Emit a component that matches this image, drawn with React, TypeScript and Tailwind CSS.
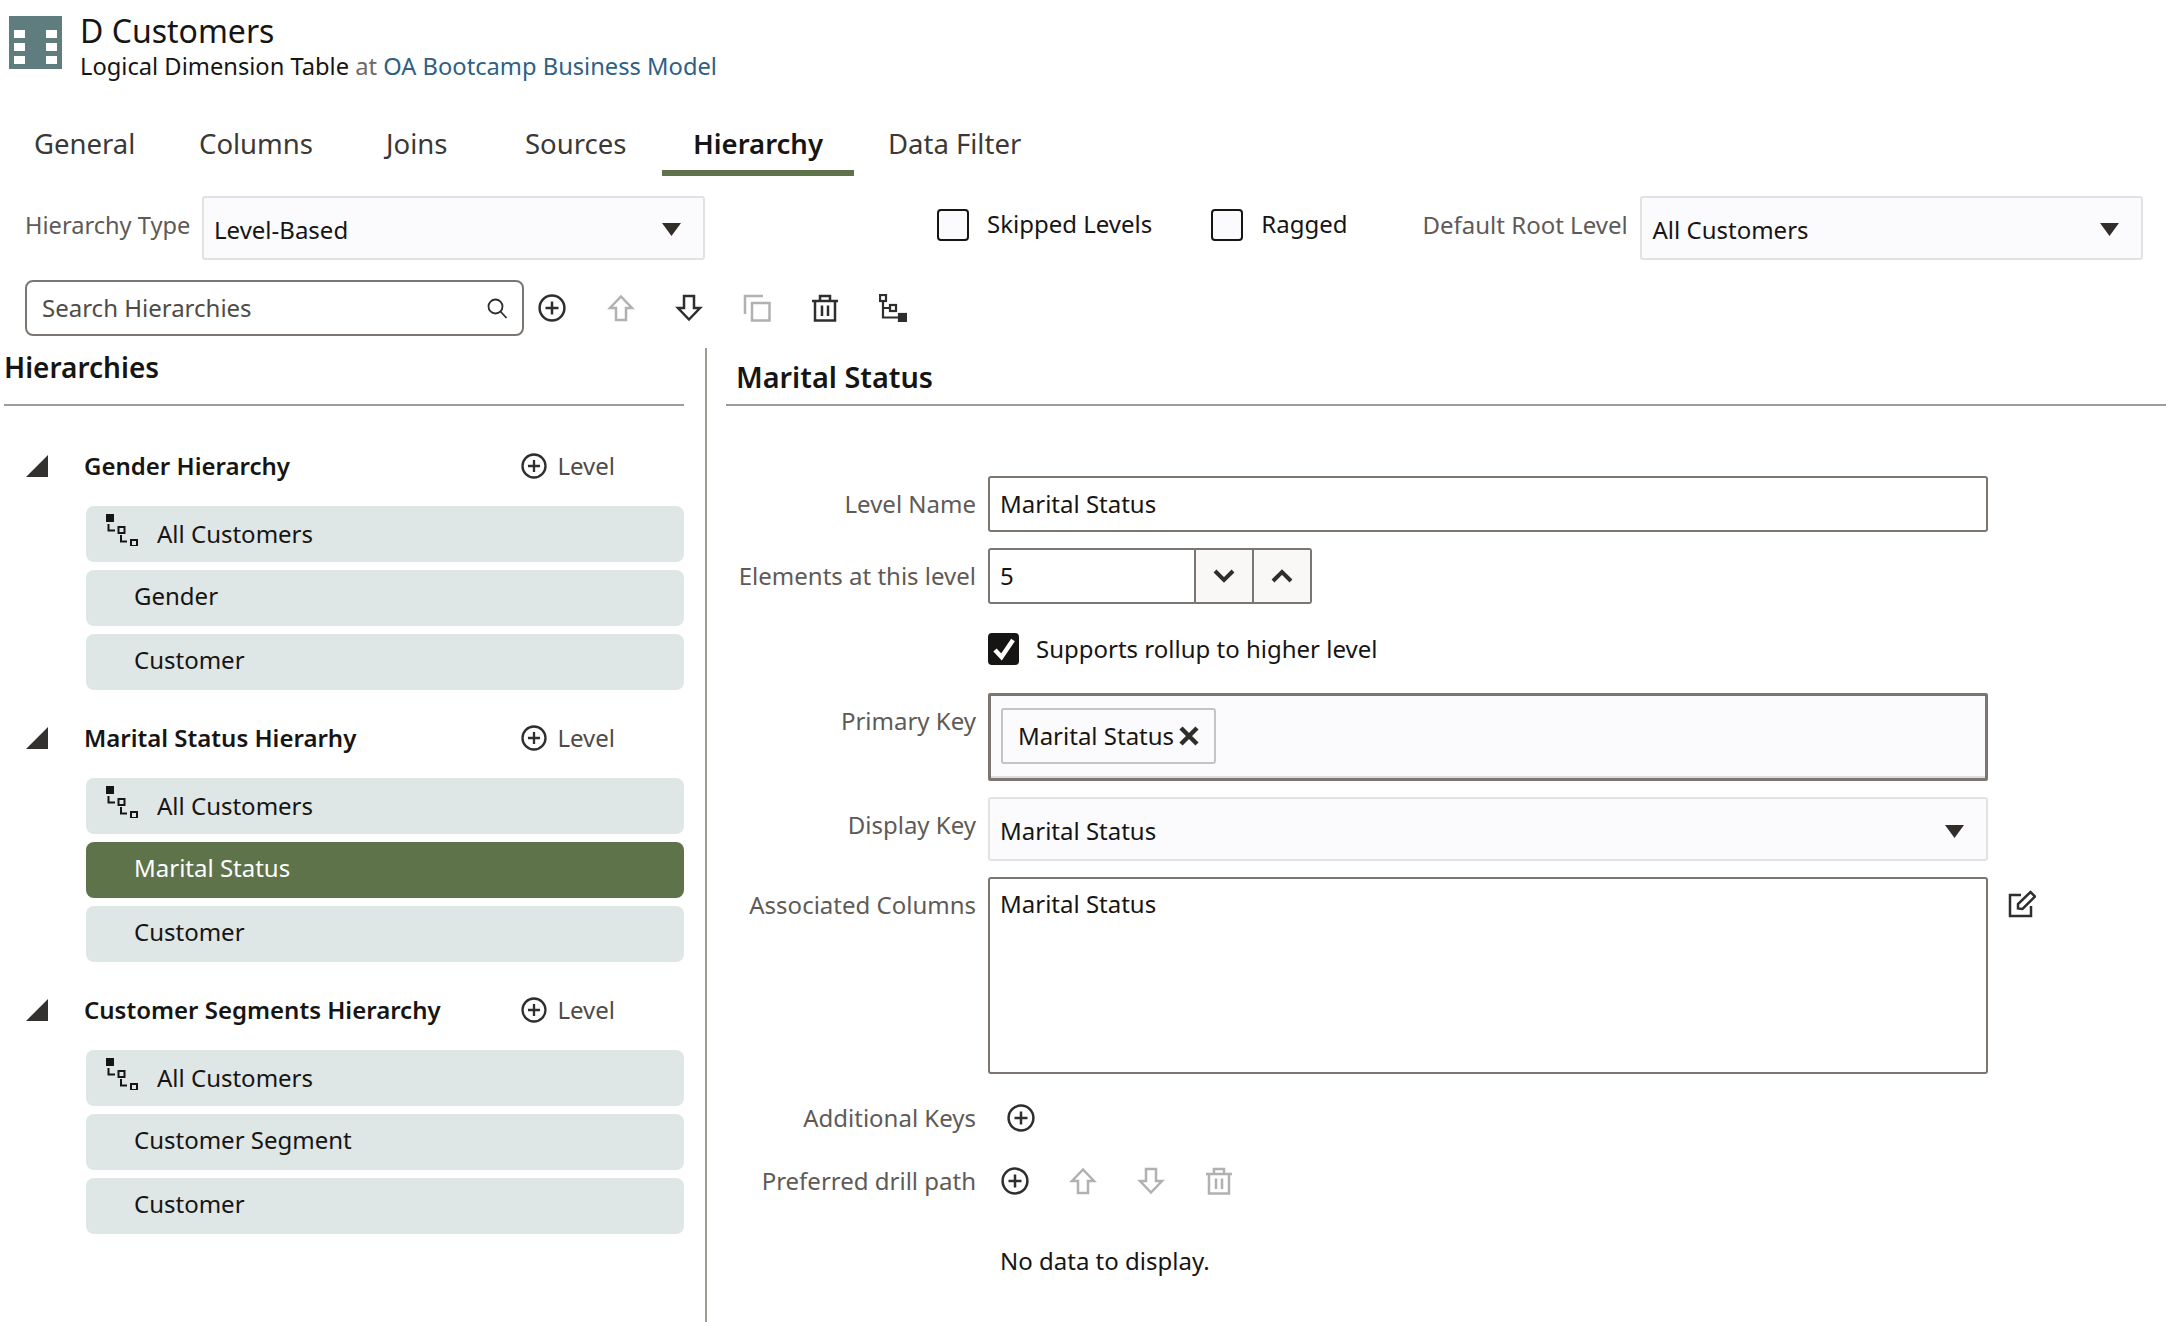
const dark = "#2f2e2c";
const muted = "#b3b1af";

const PlusCircle = ({ size = 28, color = dark }: { size?: number; color?: string }) => (
  <svg width={size} height={size} viewBox="0 0 28 28" fill="none" stroke={color} strokeWidth="2.5" className="shrink-0">
    <circle cx="14" cy="14" r="12.4" />
    <path d="M14 7.5v13M7.5 14h13" />
  </svg>
);

const ArrowUp = ({ color = muted }: { color?: string }) => (
  <svg width="28" height="28" viewBox="0 0 28 28" fill="none" stroke={color} strokeWidth="2.5" className="shrink-0">
    <path d="M14 2.5 25 14h-6v12H9V14H3z" />
  </svg>
);

const ArrowDown = ({ color = dark }: { color?: string }) => (
  <svg width="28" height="28" viewBox="0 0 28 28" fill="none" stroke={color} strokeWidth="2.5" className="shrink-0">
    <path d="M14 25.5 25 14h-6V2H9v12H3z" />
  </svg>
);

const Trash = ({ color = dark }: { color?: string }) => (
  <svg width="28" height="28" viewBox="0 0 28 28" fill="none" stroke={color} strokeWidth="2.5" className="shrink-0">
    <path d="M1 7h26M9 7V2h10v5M4 7v19.5h20V7M11 11.5v10.5M17 11.5v10.5" />
  </svg>
);

const Copy = () => (
  <svg width="28" height="28" viewBox="0 0 28 28" fill="none" stroke={muted} strokeWidth="2.5" className="shrink-0">
    <path d="M20 2H2v18" />
    <rect x="9" y="9" width="17.5" height="17.5" />
  </svg>
);

const TreeTool = () => (
  <svg width="28" height="28" viewBox="0 0 28 28" fill="none" stroke={dark} strokeWidth="2.2" className="shrink-0">
    <rect x="1" y="1" width="6" height="6" />
    <path d="M4 7v16.5h16M4 14h6" />
    <rect x="11" y="11" width="6" height="6" />
    <rect x="20" y="20" width="8" height="7" fill={dark} />
  </svg>
);

const TreeRow = () => (
  <svg width="32" height="32" viewBox="0 0 32 32" fill="none" stroke="#161513" strokeWidth="2" className="shrink-0">
    <rect x="0" y="0" width="8" height="8" fill="#161513" stroke="none" />
    <path d="M2.5 10v6.5H9M15 21v6.5h6" />
    <rect x="12.5" y="13" width="6" height="6" />
    <rect x="25" y="26" width="6" height="6" />
  </svg>
);

const Caret = () => (
  <svg width="19" height="13" viewBox="0 0 19 13" className="shrink-0">
    <path d="M0 0h19L9.5 13z" fill="#312d2a" />
  </svg>
);

const Select = ({ value, className }: { value: string; className: string }) => (
  <div className={`flex h-[64px] items-center justify-between rounded-[3px] border-2 border-[#e2e2e2] bg-[#fbfbfd] pt-[3px] pr-[22px] ${className}`}>
    <span>{value}</span>
    <Caret />
  </div>
);

const Check = ({ label }: { label: string }) => (
  <div className="flex items-center gap-[18px]">
    <div className="h-[32px] w-[32px] rounded-[4px] border-2 border-[#161513] bg-[#fbfbfd]" />
    <span className="-mt-[1px] text-[#161513]">{label}</span>
  </div>
);

const hierarchies = [
  { name: "Gender Hierarchy", levels: ["Gender", "Customer"], selected: "" },
  { name: "Marital Status Hierarhy", levels: ["Marital Status", "Customer"], selected: "Marital Status" },
  { name: "Customer Segments Hierarchy", levels: ["Customer Segment", "Customer"], selected: "" },
];

const tabs = [
  { label: "General", cls: "ml-[3px] w-[165px]" },
  { label: "Columns", cls: "w-[187px]" },
  { label: "Joins", cls: "w-[139px]" },
  { label: "Sources", cls: "w-[168px]" },
];

const FormRow = ({ label, className, alignTop, children }: { label: string; className?: string; alignTop?: boolean; children: React.ReactNode }) => (
  <div className={`flex gap-[12px] ${alignTop ? "items-start" : "items-center"} ${className ?? ""}`}>
    <div className={`w-[250px] shrink-0 text-right text-[#5f5a56] whitespace-nowrap ${alignTop ? "mt-[12px]" : ""}`}>{label}</div>
    {children}
  </div>
);

export default function App() {
  return (
    <div className="h-[1322px] w-[2166px] overflow-hidden bg-white text-[24px] leading-[32px] text-[#161513] [font-family:'Noto_Sans',sans-serif]">
      <header className="flex pl-[9px] pt-[16px]">
        <svg width="53" height="53" viewBox="0 0 53 53" className="shrink-0">
          <rect width="53" height="53" fill="#5f7d7e" />
          <g fill="#fff">
            <rect x="5" y="14" width="11" height="8" />
            <rect x="37" y="14" width="11" height="8" />
            <rect x="5" y="27" width="11" height="8" />
            <rect x="37" y="27" width="11" height="8" />
            <rect x="5" y="40" width="11" height="8" />
            <rect x="37" y="40" width="11" height="8" />
          </g>
        </svg>
        <div className="-mt-[4px] ml-[18px]">
          <div className="text-[32px] leading-[38px]">D Customers</div>
          <div className="text-[23.7px]">
            Logical Dimension Table <span className="text-[#6f6a66]">at</span>{" "}
            <span className="text-[#2f5f85]">OA Bootcamp Business Model</span>
          </div>
        </div>
      </header>

      <nav className="mt-[37px] flex h-[57px] pl-[31px] text-[#3b3835] text-[27.5px]">
        {tabs.map((t) => (
          <div key={t.label} className={`${t.cls} pt-[9px]`}>{t.label}</div>
        ))}
        <div className="-ml-[31px] flex h-[57px] w-[192px] justify-center border-b-[6px] border-[#5e7349] pt-[9px] font-semibold text-[#161513]">
          Hierarchy
        </div>
        <div className="ml-[34px] pt-[9px]">Data Filter</div>
      </nav>

      <div className="mt-[20px] flex items-center pl-[25px]">
        <div className="w-[177px] -mt-[6px] text-[#5f5a56] text-[23.6px]">Hierarchy Type</div>
        <Select value="Level-Based" className="w-[503px] pl-[10px]" />
        <div className="ml-[232px] -mt-[7px]"><Check label="Skipped Levels" /></div>
        <div className="ml-[59px] -mt-[7px]"><Check label="Ragged" /></div>
        <div className="ml-[75px] w-[217px] -mt-[6px] text-[#5f5a56] whitespace-nowrap">Default Root Level</div>
        <Select value="All Customers" className="w-[503px] pl-[11px]" />
      </div>

      <div className="mt-[20px] flex h-[56px] items-center pl-[25px]">
        <div className="flex h-[56px] w-[499px] items-center justify-between rounded-[8px] border-2 border-[#7b7671] pl-[15px] pr-[14px]">
          <span className="text-[#4f4b47]">Search Hierarchies</span>
          <svg width="21" height="21" viewBox="0 0 21 21" fill="none" stroke={dark} strokeWidth="1.8">
            <circle cx="8.5" cy="8.5" r="7" />
            <path d="m13.5 13.5 6 6.5" />
          </svg>
        </div>
        <div className="ml-[14px] flex gap-[40px]">
          <PlusCircle />
          <div className="ml-[1px]"><ArrowUp /></div>
          <ArrowDown />
          <Copy />
          <Trash />
          <TreeTool />
        </div>
      </div>

      <div className="mt-[12px] flex">
        <aside className="h-[974px] w-[707px] shrink-0 border-r-2 border-[#9e9c97] pl-[4px] pr-[21px]">
          <h2 className="h-[58px] border-b-2 border-[#9e9c97] pt-[3px] text-[28px] font-semibold">Hierarchies</h2>
          <div className="mt-[41px] flex flex-col gap-[29px]">
            {hierarchies.map((h) => (
              <section key={h.name}>
                <div className="flex h-[38px] items-center pl-[22px]">
                  <svg width="22" height="22" viewBox="0 0 22 22" className="shrink-0">
                    <path d="M0 22 22 0v22z" fill="#33312f" />
                  </svg>
                  <span className="ml-[36px] font-semibold">{h.name}</span>
                  <div className="ml-auto mr-[69px] flex items-center gap-[10px] text-[#4f4b47]">
                    <PlusCircle size={26} />
                    Level
                  </div>
                </div>
                <div className="mt-[21px] ml-[82px] flex flex-col gap-[8px]">
                  <div className="flex h-[56px] items-center rounded-[8px] bg-[#dfe6e6] pl-[20px]">
                    <div className="-mt-[8px]"><TreeRow /></div>
                    <span className="ml-[19px]">All Customers</span>
                  </div>
                  {h.levels.map((l) => (
                    <div key={l} className={`flex h-[56px] items-center rounded-[8px] pb-[4px] pl-[48px] ${h.selected === l ? "bg-[#5e7349] text-white" : "bg-[#dfe6e6]"}`}>
                      {l}
                    </div>
                  ))}
                </div>
              </section>
            ))}
          </div>
        </aside>

        <main className="flex-1 pl-[19px]">
          <h2 className="h-[58px] border-b-2 border-[#9e9c97] pl-[10px] pt-[13px] text-[28.8px] font-semibold">Marital Status</h2>

          <FormRow label="Level Name" className="mt-[70px]">
            <div className="flex h-[56px] w-[1000px] items-center rounded-[3px] border-2 border-[#7b7671] pl-[10px]">Marital Status</div>
          </FormRow>

          <FormRow label="Elements at this level" className="mt-[16px]">
            <div className="flex h-[56px] w-[324px] rounded-[3px] border-2 border-[#7b7671]">
              <div className="flex flex-1 items-center pl-[10px]">5</div>
              <div className="flex w-[58px] items-center justify-center border-l-2 border-[#7b7671] bg-[#f9f8f7]">
                <svg width="22" height="14" viewBox="0 0 22 14" fill="none" stroke={dark} strokeWidth="4"><path d="m2 2 9 9 9-9" /></svg>
              </div>
              <div className="flex w-[58px] items-center justify-center border-l-2 border-[#7b7671] bg-[#f9f8f7]">
                <svg width="22" height="14" viewBox="0 0 22 14" fill="none" stroke={dark} strokeWidth="4"><path d="m2 12 9-9 9 9" /></svg>
              </div>
            </div>
          </FormRow>

          <div className="ml-[262px] mt-[29px] flex h-[32px] items-center gap-[17px]">
            <div className="flex h-[32px] w-[31px] items-center justify-center rounded-[4px] bg-[#161513]">
              <svg width="24" height="24" viewBox="0 0 24 24" fill="none" stroke="#fff" strokeWidth="4.5"><path d="m3 13 6.5 7L21 3" /></svg>
            </div>
            Supports rollup to higher level
          </div>

          <FormRow label="Primary Key" alignTop className="mt-[28px]">
            <div className="flex h-[88px] w-[1000px] items-start rounded-[2px] border-[3px] border-[#7b7671] bg-[#fbfbfd] pl-[10px] pt-[12px] shadow-[inset_0_-2px_0_#dcdcdc]">
              <div className="flex h-[56px] w-[215px] items-center justify-center gap-[5px] rounded-[3px] border-2 border-[#c4c4c4]">
                Marital Status
                <svg width="20" height="20" viewBox="0 0 20 20" fill="none" stroke="#2f2e2c" strokeWidth="4.5"><path d="m2 2 16 16M18 2 2 18" /></svg>
              </div>
            </div>
          </FormRow>

          <FormRow label="Display Key" alignTop className="mt-[16px]">
            <div className="flex h-[64px] w-[1000px] items-center justify-between rounded-[3px] border-2 border-[#e2e2e2] bg-[#fbfbfd] pl-[10px] pr-[22px] pt-[4px]">
              Marital Status
              <Caret />
            </div>
          </FormRow>

          <div className="mt-[16px] flex items-start">
            <FormRow label="Associated Columns" alignTop>
              <div className="h-[197px] w-[1000px] rounded-[3px] border-2 border-[#7b7671] pl-[10px] pt-[9px]">Marital Status</div>
            </FormRow>
            <svg width="28" height="28" viewBox="0 0 28 28" fill="none" stroke={dark} strokeWidth="2.5" className="ml-[20px] mt-[13px]">
              <path d="M23 16v10H2V5h11" />
              <path d="M10 18.5V14L22.5 2 27 6.5 14.5 19z" />
            </svg>
          </div>

          <FormRow label="Additional Keys" className="mt-[28px]">
            <div className="ml-[19px]"><PlusCircle /></div>
          </FormRow>

          <FormRow label="Preferred drill path" className="mt-[31px]">
            <div className="ml-[13px] flex gap-[40px]">
              <PlusCircle />
              <ArrowUp />
              <ArrowDown color={muted} />
              <Trash color={muted} />
            </div>
          </FormRow>

          <div className="ml-[274px] mt-[48px]">No data to display.</div>
        </main>
      </div>
    </div>
  );
}
